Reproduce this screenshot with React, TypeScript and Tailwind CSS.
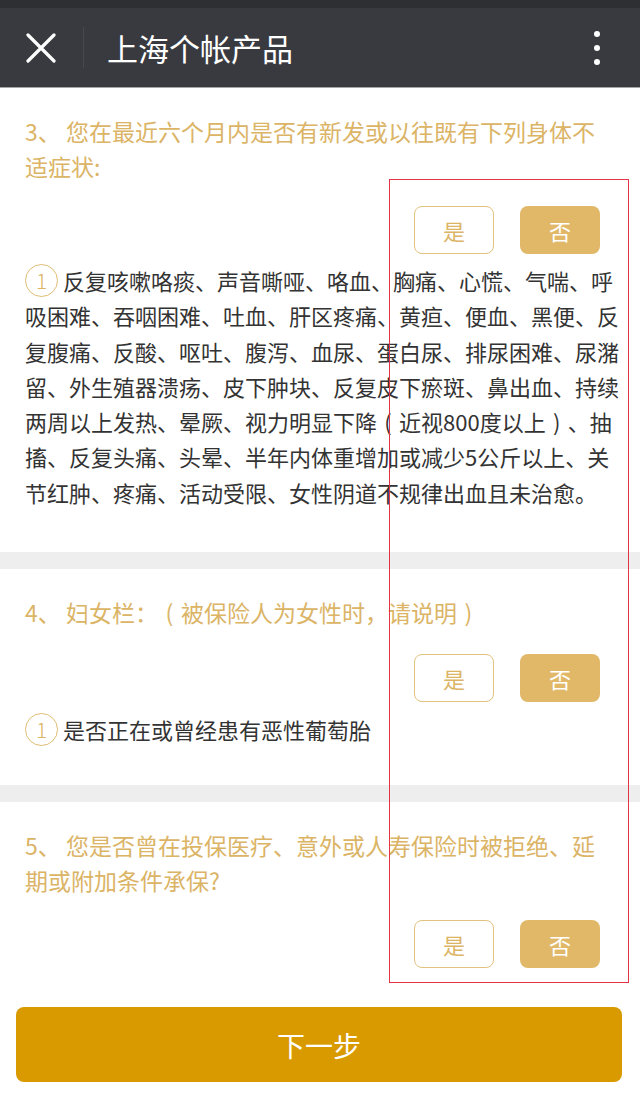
import React from 'react';

const FONT = { fontFamily: '"Noto Sans CJK SC", "Noto Sans", sans-serif' };

function CloseIcon() {
  return (
    <svg width="30" height="30" viewBox="0 0 30 30" aria-hidden="true">
      <path d="M2 2 L28 28 M28 2 L2 28" stroke="#ffffff" strokeWidth="3.2" strokeLinecap="round" />
    </svg>
  );
}

function MoreIcon() {
  return (
    <div className="flex flex-col items-center gap-[8px]">
      <span className="block h-[6px] w-[6px] rounded-full bg-white" />
      <span className="block h-[6px] w-[6px] rounded-full bg-white" />
      <span className="block h-[6px] w-[6px] rounded-full bg-white" />
    </div>
  );
}

// full-width paren, glyph centred in its box like the device font
function P({ c }: { c: string }) {
  return <span className="inline-block w-[1em] text-center">{c}</span>;
}

function Num({ n }: { n: number }) {
  return (
    <span className="mr-[5px] inline-flex h-[33px] w-[33px] shrink-0 items-center justify-center rounded-full border-[1.5px] border-[#dfbd72] text-[21px] font-light leading-none text-[#dcb466]">
      {n}
    </span>
  );
}

function YesNo({ className }: { className?: string }) {
  return (
    <div className={'flex justify-end gap-[26px] pr-[40px] ' + (className ?? '')}>
      <button
        type="button"
        className="flex h-[48px] w-[80px] items-center justify-center rounded-[8px] border-[1.5px] border-[#e3c27f] bg-white text-[22px] text-[#dcb466]"
      >
        是
      </button>
      <button
        type="button"
        className="flex h-[48px] w-[80px] items-center justify-center rounded-[8px] bg-[#e0b868] text-[22px] text-white"
      >
        否
      </button>
    </div>
  );
}

export default function App() {
  return (
    <div className="relative h-[1101px] w-[640px] overflow-hidden bg-white" style={FONT}>
      {/* top bar */}
      <div className="h-[8px] bg-[#2e2f33]" />
      <header className="flex h-[80px] items-center border-b border-[#a6a6a6] bg-[#393a3f]">
        <div className="flex w-[83px] items-center pl-[26px]">
          <CloseIcon />
        </div>
        <div className="h-[41px] w-px bg-[#48494e]" />
        <h1 className="pl-[23px] text-[31px] font-normal leading-none text-white">上海个帐产品</h1>
        <div className="ml-auto pr-[40px]">
          <MoreIcon />
        </div>
      </header>

      {/* question 3 */}
      <section className="pb-[42px] pt-[26px]">
        <p className="whitespace-nowrap px-[25px] text-[23px] leading-[35px] text-[#dbb466]">
          3、 您在最近六个月内是否有新发或以往既有下列身体不
          <br />
          适症状:
        </p>
        <YesNo className="mt-[22px]" />
        <div className="mt-[9px] whitespace-nowrap px-[25px] text-[22px] leading-[35.3px] text-[#333333]">
          <div className="flex items-center">
            <Num n={1} />
            <span>反复咳嗽咯痰、声音嘶哑、咯血、胸痛、心慌、气喘、呼</span>
          </div>
          <div>吸困难、吞咽困难、吐血、肝区疼痛、黄疸、便血、黑便、反</div>
          <div>复腹痛、反酸、呕吐、腹泻、血尿、蛋白尿、排尿困难、尿潴</div>
          <div>留、外生殖器溃疡、皮下肿块、反复皮下瘀斑、鼻出血、持续</div>
          <div>
            两周以上发热、晕厥、视力明显下降
            <P c="(" />
            近视800度以上
            <P c=")" />
            、抽
          </div>
          <div>搐、反复头痛、头晕、半年内体重增加或减少5公斤以上、关</div>
          <div>节红肿、疼痛、活动受限、女性阴道不规律出血且未治愈。</div>
        </div>
      </section>

      <div className="h-[17px] bg-[#eeeeee]" />

      {/* question 4 */}
      <section className="pb-[38px] pt-[26px]">
        <p className="whitespace-nowrap px-[25px] text-[23px] leading-[35px] text-[#dbb466]">
          4、 妇女栏：
          <P c="(" />
          被保险人为女性时，请说明
          <P c=")" />
        </p>
        <YesNo className="mt-[24px]" />
        <div className="mt-[10px] flex items-center px-[25px] text-[22px] leading-[35.3px] text-[#333333]">
          <Num n={1} />
          <span>是否正在或曾经患有恶性葡萄胎</span>
        </div>
      </section>

      <div className="h-[17px] bg-[#eeeeee]" />

      {/* question 5 */}
      <section className="pt-[26px]">
        <p className="whitespace-nowrap px-[25px] text-[23px] leading-[35px] text-[#dbb466]">
          5、 您是否曾在投保医疗、意外或人寿保险时被拒绝、延
          <br />
          期或附加条件承保?
        </p>
        <YesNo className="mt-[22px]" />
      </section>

      <div className="px-[16px] pt-[39px]">
        <button
          type="button"
          className="flex h-[75px] w-[606px] items-center justify-center rounded-[8px] bg-[#d99a00] text-[28px] text-white"
        >
          下一步
        </button>
      </div>

      {/* annotation box */}
      <div className="pointer-events-none absolute left-[389px] top-[179px] h-[804px] w-[240px] border-[1.5px] border-[#e23446]" />
    </div>
  );
}
